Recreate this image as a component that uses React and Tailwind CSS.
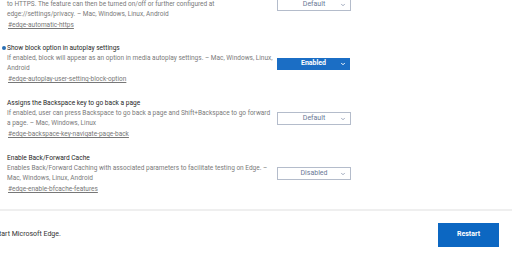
import { ChevronDown } from 'lucide-react';

const flags = [
  {
    lines: [
      'to HTTPS. The feature can then be turned on/off or further configured at',
      'edge://settings/privacy. – Mac, Windows, Linux, Android',
    ],
    link: '#edge-automatic-https',
    value: 'Default',
    partial: true,
  },
  {
    title: 'Show block option in autoplay settings',
    lines: [
      'If enabled, block will appear as an option in media autoplay settings. – Mac, Windows, Linux,',
      'Android',
    ],
    link: '#edge-autoplay-user-setting-block-option',
    value: 'Enabled',
    modified: true,
  },
  {
    title: 'Assigns the Backspace key to go back a page',
    lines: [
      'If enabled, user can press Backspace to go back a page and Shift+Backspace to go forward',
      'a page. – Mac, Windows, Linux',
    ],
    link: '#edge-backspace-key-navigate-page-back',
    value: 'Default',
  },
  {
    title: 'Enable Back/Forward Cache',
    lines: [
      'Enables Back/Forward Caching with associated parameters to facilitate testing on Edge. –',
      'Mac, Windows, Linux, Android',
    ],
    link: '#edge-enable-bfcache-features',
    value: 'Disabled',
  },
];

function FlagSelect({ value, active, className = '' }) {
  if (active) {
    return (
      <div className={`relative flex h-[12px] w-[73px] items-center justify-center bg-[#1b6ec5] text-[7px] font-bold text-white ${className}`}>
        <span>{value}</span>
        <ChevronDown className="absolute right-[4px] top-[3px] h-[6px] w-[6px]" strokeWidth={4} />
      </div>
    );
  }
  return (
    <div className={`relative flex h-[13px] w-[74px] items-center justify-center border border-[#b4bccb] bg-white text-[7px] text-[#6a7896] ${className}`}>
      <span>{value}</span>
      <ChevronDown className="absolute right-[4px] top-[3px] h-[6px] w-[6px] text-[#6a7896]" strokeWidth={2.5} />
    </div>
  );
}

function FlagRow({ flag }) {
  return (
    <div className={flag.partial ? 'mb-[-1px] flex items-start' : 'flex items-center'}>
      <div className="w-[277px] pl-[7px]">
        {flag.title && (
          <div className="relative h-[10px] text-[6.6px] leading-[10px] text-[#262626]">
            {flag.modified && (
              <span className="absolute left-[-5px] top-[3px] h-[4px] w-[4px] rounded-full bg-[#2a6fb4]" />
            )}
            {flag.title}
          </div>
        )}
        <div className="text-[6.5px] leading-[10px] text-[#7a7a7a]">
          {flag.lines.map((line) => (
            <div key={line} className="h-[10px] whitespace-nowrap">{line}</div>
          ))}
        </div>
        <div className="mt-[1px] h-[10px] pl-[1px] text-[6.5px] leading-[10px] text-[#777] underline">
          {flag.link}
        </div>
      </div>
      <FlagSelect
        value={flag.value}
        active={flag.value === 'Enabled'}
        className={flag.partial ? 'mt-[-1px]' : ''}
      />
    </div>
  );
}

export default function App() {
  return (
    <div
      className="h-[258px] w-[512px] overflow-hidden bg-white"
      style={{ fontFamily: 'Roboto, "Liberation Sans", sans-serif' }}
    >
      <div className="mt-[-1px] flex h-[210px] flex-col gap-[14px]">
        {flags.map((flag) => (
          <FlagRow key={flag.link} flag={flag} />
        ))}
      </div>
      <div className="h-[2px] bg-[#efefef]" />
      <div className="flex h-[47px] items-center justify-between pr-[13px]">
        <span className="ml-[-1px] text-[7px] text-[#333]">tart Microsoft Edge.</span>
        <button className="h-[24px] w-[61px] bg-[#0c67c2] text-[7px] font-bold text-white">Restart</button>
      </div>
    </div>
  );
}
